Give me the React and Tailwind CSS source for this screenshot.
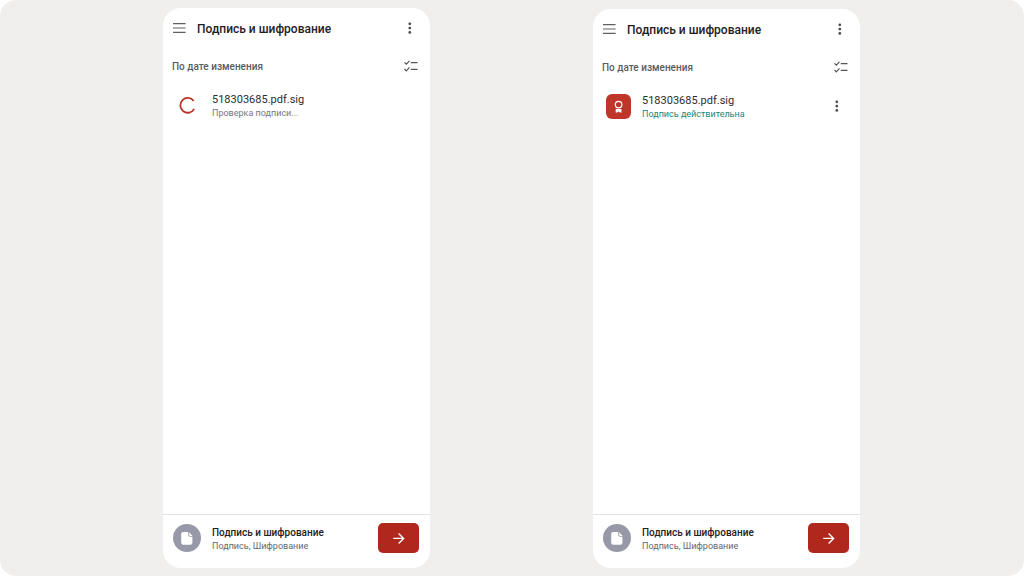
import React from 'react';
import clsx from 'clsx';

function MenuIcon() {
    return (
        <svg className="h-4 w-[13px]" viewBox="0 0 13 16" fill="none" stroke="#5f6064" strokeWidth="1.2" aria-hidden="true">
            <path d="M0 3.7h12.6M0 8h12.6M0 12.3h12.6" />
        </svg>
    );
}

function DotsIcon() {
    return (
        <svg className="h-4 w-4" viewBox="0 0 16 16" fill="#4b4c50" aria-hidden="true">
            <circle cx="7.8" cy="3.8" r="1.4" />
            <circle cx="7.8" cy="8.1" r="1.4" />
            <circle cx="7.8" cy="12.4" r="1.4" />
        </svg>
    );
}

function ChecklistIcon() {
    return (
        <svg className="h-4 w-[14px]" viewBox="0 0 14 16" fill="none" stroke="#55565a" strokeWidth="1.2" aria-hidden="true">
            <path d="M0.5 4.4l1.8 1.8 3.2-3.4M0.5 11l1.8 1.8 3.2-3.4M6.8 4.7h6.7M6.8 11.3h6.7" />
        </svg>
    );
}

function Spinner() {
    return (
        <svg className="h-[25px] w-[25px]" viewBox="0 0 25 25" fill="none" stroke="#b8342a" strokeWidth="1.8" aria-hidden="true">
            <path d="M17.7 8A7.4 7.4 0 1 0 18.2 15.9" />
        </svg>
    );
}

function SignedIcon() {
    return (
        <span className="flex h-[25px] w-[25px] items-center justify-center rounded-md bg-[#c03529]">
            <svg className="h-[25px] w-[25px]" viewBox="0 0 25 25" fill="none" aria-hidden="true">
                <circle cx="12.6" cy="10.6" r="3.3" stroke="#fff" strokeWidth="1.2" />
                <path d="M9.7 14.9h5.8v3.5h-1.6l-1.3-1-1.3 1H9.7z" fill="#fff" />
            </svg>
        </span>
    );
}

function DocumentIcon() {
    return (
        <span className="flex h-7 w-7 shrink-0 items-center justify-center rounded-full bg-[#9799a8]">
            <svg className="h-7 w-7" viewBox="0 0 28 28" aria-hidden="true">
                <path d="M10.2 8h5v2.8a2 2 0 0 0 2 2h2.2v5.9a2 2 0 0 1-2 2h-7.2a2 2 0 0 1-2-2V10a2 2 0 0 1 2-2z" fill="#fff" />
                <path d="M16.1 8.2l3.1 3.2v.5h-2a1.1 1.1 0 0 1-1.1-1.1z" fill="#fff" />
            </svg>
        </span>
    );
}

function ArrowIcon() {
    return (
        <svg className="h-4 w-4" viewBox="0 0 16 16" fill="none" stroke="#fff" strokeWidth="1.4" aria-hidden="true">
            <path d="M2.2 8.4h10.4M7.6 3.4l5 5-5 5" />
        </svg>
    );
}

function Screen({ verified, className }) {
    return (
        <section className={clsx('flex min-w-0 flex-1 flex-col overflow-hidden rounded-[18px] bg-white', className)}>
            {/* Header */}
            <header className="flex h-10 items-center pr-3 pl-[10px]">
                <button type="button" aria-label="Меню">
                    <MenuIcon />
                </button>
                <h1 className="ml-[11px] flex-1 pt-px text-[12px] leading-4 font-medium whitespace-nowrap text-[#1f2023]">Подпись и шифрование</h1>
                <button type="button" aria-label="Ещё">
                    <DotsIcon />
                </button>
            </header>

            {/* Sorting */}
            <div className="flex h-9 items-center justify-between pr-3 pl-[9px]">
                <h2 className="pt-px text-[10px] leading-4 font-medium text-[#5b5c61]">По дате изменения</h2>
                <button type="button" aria-label="Выбрать файлы">
                    <ChecklistIcon />
                </button>
            </div>

            {/* Files */}
            <ul className="flex-1">
                <li className="flex h-[42px] items-center pr-[15px] pl-[13px]">
                    {verified ? <SignedIcon /> : <Spinner />}
                    <div className="ml-[11px] flex-1 pt-[2px]">
                        <p className="text-[11px] leading-[14px] text-[#2b2c30]">518303685.pdf.sig</p>
                        <p className={clsx('text-[9px] leading-[13px]', verified ? 'text-[#18877a]' : 'text-[#77787c]')}>
                            {verified ? 'Подпись действительна' : 'Проверка подписи...'}
                        </p>
                    </div>
                    {verified && (
                        <button type="button" aria-label="Действия с файлом">
                            <DotsIcon />
                        </button>
                    )}
                </li>
            </ul>

            {/* Current operation */}
            <footer className="flex items-center border-t border-[#e2e2e2] pt-2 pr-[11px] pb-[15px] pl-[10px]">
                <DocumentIcon />
                <div className="ml-[11px] flex-1 pt-[2px] whitespace-nowrap">
                    <p className="text-[10px] leading-[14px] font-medium text-[#1f2023]">Подпись и шифрование</p>
                    <p className="text-[9px] leading-[13px] text-[#66676b]">Подпись, Шифрование</p>
                </div>
                <button type="button" aria-label="Продолжить" className="flex h-[30px] w-[41px] items-center justify-center rounded-[5px] bg-[#b0281d]">
                    <ArrowIcon />
                </button>
            </footer>
        </section>
    );
}

export default function App() {
    return (
        <div className="min-h-screen bg-white font-['Roboto',sans-serif]">
            <main className="flex min-h-screen gap-[163px] rounded-2xl bg-[#f0efed] py-2 pr-[164px] pl-[163px]">
                <Screen verified={false} />
                <Screen verified className="mt-px" />
            </main>
        </div>
    );
}
